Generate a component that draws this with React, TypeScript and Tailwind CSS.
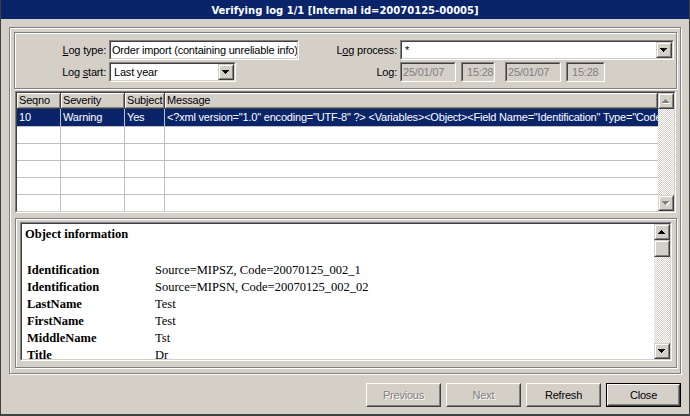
import type { ReactNode } from "react";

// Classic Win2000 "Verifying log" dialog

const objectRows = [
  ["Identification", "Source=MIPSZ, Code=20070125_002_1"],
  ["Identification", "Source=MIPSN, Code=20070125_002_02"],
  ["LastName", "Test"],
  ["FirstName", "Test"],
  ["MiddleName", "Tst"],
  ["Title", "Dr"],
];

const message =
  '<?xml version="1.0" encoding="UTF-8" ?> <Variables><Object><Field Name="Identification" Type="Code" Value="Source=MIPSZ, Code=20070125_002_1"/>';

function Sunken({
  className = "",
  inner = "",
  children,
}: {
  className?: string;
  inner?: string;
  children?: ReactNode;
}) {
  return (
    <div
      className={`shrink-0 border border-t-[#808080] border-l-[#808080] border-b-white border-r-white ${className}`}
    >
      <div
        className={`w-full h-full border border-t-[#404040] border-l-[#404040] border-b-[#d4d0c8] border-r-[#d4d0c8] ${inner}`}
      >
        {children}
      </div>
    </div>
  );
}

function Arrow({ dir, disabled }: { dir: "up" | "down"; disabled?: boolean }) {
  const d =
    dir === "down"
      ? "M0 0h7v1H0zM1 1h5v1H1zM2 2h3v1H2zM3 3h1v1H3z"
      : "M3 0h1v1H3zM2 1h3v1H2zM1 2h5v1H1zM0 3h7v1H0z";
  return (
    <svg width="8" height="5" viewBox="0 0 8 5" className="block" shapeRendering="crispEdges">
      {disabled && <path d={d} fill="#fff" transform="translate(1 1)" />}
      <path d={d} fill={disabled ? "#808080" : "#000"} />
    </svg>
  );
}

// raised 16x16 button used for scroll arrows and combo drop-downs
function SmallButton({ children, className = "" }: { children?: ReactNode; className?: string }) {
  return (
    <div
      className={`shrink-0 w-[16px] h-[16px] border border-t-[#d4d0c8] border-l-[#d4d0c8] border-b-[#404040] border-r-[#404040] ${className}`}
    >
      <div className="w-full h-full bg-[#d4d0c8] border border-t-white border-l-white border-b-[#808080] border-r-[#808080] flex items-center justify-center">
        {children}
      </div>
    </div>
  );
}

function Combo({ width, text }: { width: string; text: string }) {
  return (
    <Sunken className={`${width} h-[20px]`} inner="bg-white flex">
      <div className="flex-1 pl-[3px] leading-[16px] whitespace-nowrap overflow-hidden">{text}</div>
      <SmallButton>
        <Arrow dir="down" />
      </SmallButton>
    </Sunken>
  );
}

function Field({ width, text, pad = "pl-[1px]" }: { width: string; text: string; pad?: string }) {
  return (
    <Sunken className={`${width} h-[20px]`} inner={`bg-[#d4d0c8] text-[#808080] leading-[16px] ${pad}`}>
      {text}
    </Sunken>
  );
}

function Button({
  label,
  disabled,
  isDefault,
}: {
  label: string;
  disabled?: boolean;
  isDefault?: boolean;
}) {
  const face = (
    <div className="w-full h-full border border-t-white border-l-white border-b-[#404040] border-r-[#404040]">
      <div
        className={`w-full h-full border border-t-[#d4d0c8] border-l-[#d4d0c8] border-b-[#808080] border-r-[#808080] flex items-center justify-center ${
          disabled ? "text-[#808080] [text-shadow:1px_1px_0_#fff]" : "text-black"
        }`}
      >
        {label}
      </div>
    </div>
  );
  return (
    <div className={`w-[75px] h-[24px] shrink-0 ${isDefault ? "border border-black" : ""}`}>{face}</div>
  );
}

const etched = "border border-[#808080] shadow-[inset_1px_1px_0_#fff,1px_1px_0_#fff]";
const track = "bg-[repeating-conic-gradient(#ffffff_0_25%,#d4d0c8_0_50%)] bg-[length:2px_2px]";
const headCell =
  "h-[16px] shrink-0 pl-[2px] leading-[15px] bg-[#d4d0c8] border-r border-b border-[#404040] shadow-[inset_1px_1px_0_#fff,inset_-1px_-1px_0_#808080] whitespace-nowrap overflow-hidden";
const cols = ["w-[44px]", "w-[64px]", "w-[40px]", "w-[493px]"];

export default function App() {
  return (
    <div className="w-[690px] h-[416px] bg-[#d4d0c8] border-x border-b-2 border-[#404040] flex flex-col overflow-hidden font-['Liberation_Sans',Arial,sans-serif] text-[11px] tracking-[-0.2px] text-black">
      {/* Title bar */}
      <div className="h-[19px] shrink-0 bg-[#0a246a] text-white font-['DejaVu_Sans',Verdana,sans-serif] font-bold text-[10px] tracking-normal flex items-center justify-center pt-[2px]">
        Verifying log 1/1 [Internal id=20070125-00005]
      </div>

      {/* Outer frame */}
      <div className={`ml-[8px] mt-[8px] w-[672px] h-[347px] shrink-0 flex flex-col ${etched}`}>
        {/* Filter group */}
        <div className={`ml-[4px] mt-[4px] w-[663px] h-[57px] shrink-0 pt-[7px] flex flex-col gap-[2px] ${etched}`}>
          <div className="flex items-center h-[20px]">
            <div className="w-[91px] mr-[3px] text-right">
              <u>L</u>og type:
            </div>
            <Sunken className="w-[190px] h-[20px]" inner="bg-white pl-[1px] leading-[16px] whitespace-nowrap overflow-hidden">
              Order import (containing unreliable info)
            </Sunken>
            <div className="w-[98px] mr-[3px] text-right">
              L<u>o</u>g process:
            </div>
            <Combo width="w-[274px]" text="*" />
          </div>
          <div className="flex items-center h-[20px]">
            <div className="w-[91px] mr-[3px] text-right">
              Log <u>s</u>tart:
            </div>
            <div className="w-[190px] shrink-0">
              <Combo width="w-[127px]" text="Last year" />
            </div>
            <div className="w-[98px] mr-[3px] text-right">Log:</div>
            <Field width="w-[56px]" text="25/01/07" />
            <Field width="w-[34px] ml-[5px]" text="15:28" pad="pl-[4px]" />
            <Field width="w-[56px] ml-[10px]" text="25/01/07" />
            <Field width="w-[39px] ml-[5px]" text="15:28" pad="pl-[4px]" />
          </div>
        </div>

        {/* Log list */}
        <Sunken className="ml-[5px] mt-[2px] w-[661px] h-[122px]" inner="bg-white flex">
          <div className="w-[641px] flex flex-col">
            <div className="flex">
              {["Seqno", "Severity", "Subject", "Message"].map((h, i) => (
                <div key={h} className={`${headCell} ${cols[i]}`}>
                  {h}
                </div>
              ))}
            </div>
            <div className="flex h-[17px] bg-[#0a246a] text-white leading-[17px]">
              {["10", "Warning", "Yes", message].map((c, i) => (
                <div
                  key={i}
                  className={`${cols[i]} shrink-0 pl-[2px] whitespace-nowrap overflow-hidden ${
                    i < 3 ? "border-r border-[#c0c0c0]" : ""
                  }`}
                >
                  {c}
                </div>
              ))}
            </div>
            {[0, 1, 2, 3, 4].map((r) => (
              <div key={r} className="flex h-[17px] border-t border-[#c0c0c0]">
                {cols.map((w, i) => (
                  <div key={i} className={`${w} shrink-0 ${i < 3 ? "border-r border-[#c0c0c0]" : ""}`} />
                ))}
              </div>
            ))}
          </div>
          <div className="w-[16px] flex flex-col">
            <SmallButton>
              <Arrow dir="up" disabled />
            </SmallButton>
            <div className={`flex-1 ${track}`} />
            <SmallButton>
              <Arrow dir="down" disabled />
            </SmallButton>
          </div>
        </Sunken>

        {/* Object information */}
        <div className={`ml-[5px] mt-[5px] w-[662px] h-[150px] shrink-0 pt-[3px] pl-[4px] ${etched}`}>
          <Sunken className="w-[652px] h-[139px]" inner="bg-white flex">
            <div className="flex-1 overflow-hidden pl-[3px] pt-[2px] font-['Liberation_Serif','Times_New_Roman',serif] text-[12.5px] tracking-normal leading-[17px] text-black">
              <div className="font-bold">Object information</div>
              <div className="mt-[19px] pl-[2px]">
                {objectRows.map(([k, v], i) => (
                  <div key={i} className="flex h-[17px] whitespace-nowrap">
                    <div className="w-[128px] font-bold shrink-0">{k}</div>
                    <div>{v}</div>
                  </div>
                ))}
              </div>
            </div>
            <div className="w-[16px] flex flex-col">
              <SmallButton>
                <Arrow dir="up" />
              </SmallButton>
              <SmallButton className="h-[17px]" />
              <div className={`flex-1 ${track}`} />
              <SmallButton>
                <Arrow dir="down" />
              </SmallButton>
            </div>
          </Sunken>
        </div>
      </div>

      {/* Buttons */}
      <div className="flex justify-end gap-[5px] mt-[9px] pr-[8px]">
        <Button label="Previous" disabled />
        <Button label="Next" disabled />
        <Button label="Refresh" />
        <Button label="Close" isDefault />
      </div>
    </div>
  );
}
